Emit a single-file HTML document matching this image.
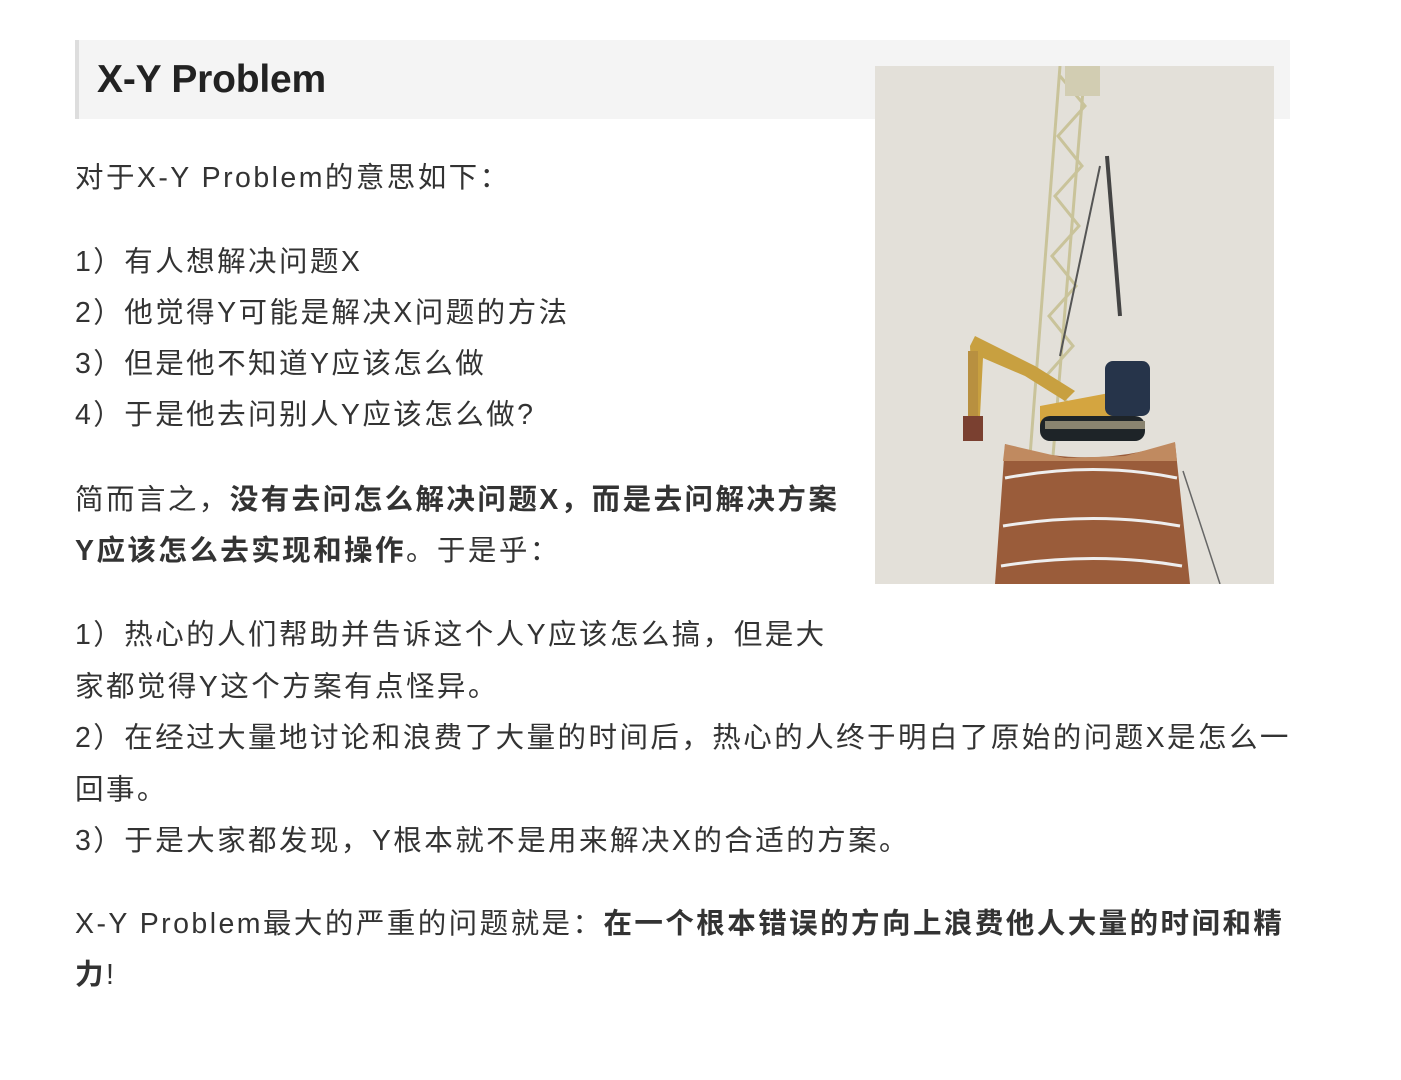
<!DOCTYPE html>
<html><head><meta charset="utf-8"><style>
body{margin:0;background:#fff;width:1401px;height:1080px;position:relative;overflow:hidden;font-family:"Liberation Sans","Noto Sans CJK SC",sans-serif;color:#333}
.h{position:absolute;left:75px;top:40px;width:1215px;height:79px;background:#f4f4f4;border-left:4px solid #ddd;box-sizing:border-box}
.h span{position:absolute;left:18px;top:18px;font-size:39px;font-weight:bold;color:#222;letter-spacing:-0.2px}
.l{position:absolute;left:75px;font-size:28.5px;line-height:51px;height:51px;white-space:nowrap;letter-spacing:2.45px}
b{color:#333}
svg{position:absolute;left:875px;top:66px}
</style></head><body>
<div class="h"><span>X-Y Problem</span></div>
<svg width="399" height="518" viewBox="0 0 399 518">
<rect width="399" height="518" fill="#e3e0d9"/>
<g stroke="#c9c39a" stroke-width="3" fill="none">
<line x1="185" y1="0" x2="155" y2="390"/><line x1="210" y1="0" x2="178" y2="390"/>
<path d="M185 10 L210 40 L183 70 L207 100 L180 130 L204 160 L177 190 L201 220 L174 250 L198 280 L171 310 L195 340 L168 370"/>
</g>
<rect x="190" y="0" width="35" height="30" fill="#d2cdb2"/>
<line x1="232" y1="90" x2="245" y2="250" stroke="#444" stroke-width="4"/>
<line x1="225" y1="100" x2="185" y2="290" stroke="#555" stroke-width="2"/>
<path d="M95 280 L100 270 L160 300 L200 325 L190 335 L150 310 L108 292 L105 350 L98 350 Z" fill="#c8a040"/>
<rect x="93" y="285" width="10" height="85" fill="#b89040"/>
<rect x="88" y="350" width="20" height="25" fill="#7a4030"/>
<path d="M165 340 L245 325 L258 345 L250 360 L165 360 Z" fill="#d4a540"/>
<rect x="230" y="295" width="45" height="55" rx="8" fill="#26344a"/>
<rect x="165" y="350" width="105" height="25" rx="10" fill="#1e2428"/>
<rect x="170" y="355" width="100" height="8" fill="#8a8470"/>
<path d="M130 378 Q210 405 300 377 L315 518 L120 518 Z" fill="#9a5c3a"/>
<path d="M130 378 L190 392 L250 390 L300 376 L302 395 L128 395 Z" fill="#c08a60"/>
<g stroke="#eee" stroke-width="3" fill="none">
<path d="M130 412 Q220 395 302 412"/><path d="M128 460 Q220 445 305 460"/><path d="M126 500 Q220 485 307 500"/>
</g>
<line x1="308" y1="405" x2="345" y2="518" stroke="#666" stroke-width="1.5"/>
</svg>
<div class="l" style="top:153px">对于X-Y Problem的意思如下：</div>
<div class="l" style="top:237px">1）有人想解决问题X</div>
<div class="l" style="top:288px">2）他觉得Y可能是解决X问题的方法</div>
<div class="l" style="top:339px">3）但是他不知道Y应该怎么做</div>
<div class="l" style="top:390px">4）于是他去问别人Y应该怎么做?</div>
<div class="l" style="top:475px">简而言之，<b>没有去问怎么解决问题X，而是去问解决方案</b></div>
<div class="l" style="top:526px"><b>Y应该怎么去实现和操作</b>。于是乎：</div>
<div class="l" style="top:610px">1）热心的人们帮助并告诉这个人Y应该怎么搞，但是大</div>
<div class="l" style="top:662px">家都觉得Y这个方案有点怪异。</div>
<div class="l" style="top:713px">2）在经过大量地讨论和浪费了大量的时间后，热心的人终于明白了原始的问题X是怎么一</div>
<div class="l" style="top:765px">回事。</div>
<div class="l" style="top:816px">3）于是大家都发现，Y根本就不是用来解决X的合适的方案。</div>
<div class="l" style="top:899px">X-Y Problem最大的严重的问题就是：<b>在一个根本错误的方向上浪费他人大量的时间和精</b></div>
<div class="l" style="top:950px"><b>力</b>!</div>
</body></html>
